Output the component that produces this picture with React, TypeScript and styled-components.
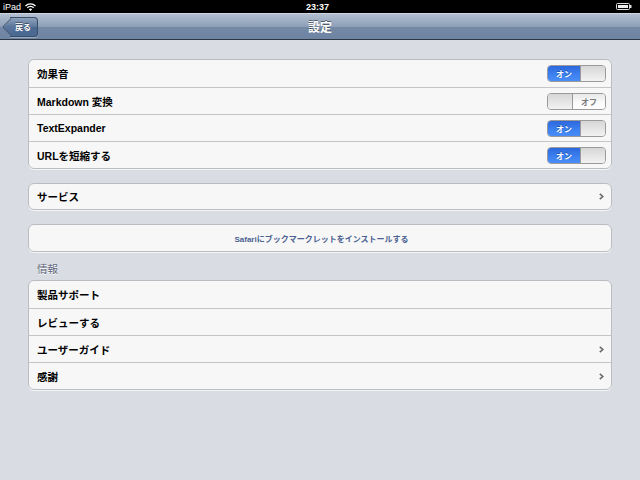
import React from "react";
import styled, { createGlobalStyle } from "styled-components";

const GlobalStyle = createGlobalStyle`
  html, body {
    margin: 0;
    padding: 0;
    background: #d9dce2;
  }
  body {
    font-family: "Liberation Sans", "Noto Sans CJK JP", sans-serif;
  }
`;

const Screen = styled.div`
  width: 640px;
  height: 480px;
  background: #d9dce2;
  overflow: hidden;
  display: flex;
  flex-direction: column;
`;

const StatusBar = styled.div`
  height: 13px;
  background: #000;
  color: #fff;
  font-size: 9px;
  display: grid;
  grid-template-columns: 1fr auto 1fr;
  align-items: center;
  padding: 0 8px 0 3px;
`;

const StatusLeft = styled.div`
  display: flex;
  align-items: center;
  gap: 4px;
`;

const StatusTime = styled.div`
  font-weight: bold;
`;

const StatusRight = styled.div`
  display: flex;
  justify-content: flex-end;
  align-items: center;
`;

const NavBar = styled.div`
  height: 25px;
  background: linear-gradient(#b3bfcf, #8d9fb8 50%, #7489a6 51%, #6d84a2);
  border-top: 1px solid #cdd5df;
  border-bottom: 1px solid #2d3642;
  display: grid;
  grid-template-columns: 1fr auto 1fr;
  align-items: center;
  padding: 0 5px;
`;

const BackButton = styled.div`
  justify-self: start;
  position: relative;
  height: 18px;
  margin-left: 5px;
  padding: 0 6px 0 5px;
  display: flex;
  align-items: center;
  color: #fff;
  font-size: 8px;
  font-weight: bold;
  text-shadow: 0 -1px 0 rgba(0, 0, 0, 0.45);
  background: linear-gradient(#8ea1bb, #5c779c 50%, #4a6890 51%, #4b6a93);
  border: 1px solid #3b4e69;
  border-left: none;
  border-radius: 0 4px 4px 0;
  box-shadow: 0 1px 0 rgba(255, 255, 255, 0.3);
  &::before {
    content: "";
    position: absolute;
    left: -6px;
    top: 2px;
    width: 12px;
    height: 12px;
    transform: rotate(45deg) scaleX(0.9);
    background: linear-gradient(135deg, #8ea1bb, #5c779c 50%, #4b6a93);
    border-left: 1px solid #3b4e69;
    border-bottom: 1px solid #3b4e69;
    border-radius: 0 0 0 3px;
  }
  span {
    position: relative;
  }
`;

const Title = styled.div`
  color: #fff;
  font-size: 12px;
  font-weight: bold;
  text-shadow: 0 -1px 0 rgba(0, 0, 0, 0.45);
`;

const Content = styled.div`
  padding: 19px 28px 0;
  display: flex;
  flex-direction: column;
`;

const Group = styled.div<{ $gap?: number }>`
  background: #f7f7f7;
  border: 1px solid #b9bcc1;
  border-radius: 6px;
  box-shadow: 0 1px 0 rgba(255, 255, 255, 0.7);
  margin-bottom: ${(p) => p.$gap ?? 14}px;
  overflow: hidden;
`;

const Row = styled.div<{ $h?: number }>`
  box-sizing: border-box;
  height: ${(p) => p.$h ?? 27}px;
  display: flex;
  align-items: center;
  justify-content: space-between;
  padding: 0 5px 0 8px;
  font-size: 10.5px;
  font-weight: bold;
  color: #000;
  & + & {
    border-top: 1px solid #c3c5c9;
  }
`;

const ButtonRow = styled(Row)`
  justify-content: center;
  font-size: 8px;
  color: #4a6290;
`;

const SectionHeader = styled.div`
  font-size: 10.5px;
  line-height: 12px;
  color: #5e6679;
  text-shadow: 0 1px 0 #fff;
  padding: 0 0 5px 9px;
  margin-top: -3px;
`;

const Switch = styled.div<{ $on: boolean }>`
  width: 59px;
  height: 17px;
  box-sizing: border-box;
  border: 1px solid #9a9a9a;
  border-radius: 4px;
  overflow: hidden;
  display: flex;
  flex-direction: ${(p) => (p.$on ? "row" : "row-reverse")};
  font-size: 8px;
  font-weight: bold;
`;

const SwitchLabel = styled.div<{ $on: boolean }>`
  flex: 1;
  display: flex;
  align-items: center;
  justify-content: center;
  color: ${(p) => (p.$on ? "#fff" : "#7a7a7a")};
  background: ${(p) =>
    p.$on
      ? "linear-gradient(#2c68dc, #3d82f2 60%, #4b8cf5)"
      : "linear-gradient(#e8e8e8, #fbfbfb 60%, #fdfdfd)"};
  text-shadow: ${(p) => (p.$on ? "0 -1px 0 rgba(0,0,0,0.3)" : "none")};
`;

const Knob = styled.div<{ $on: boolean }>`
  width: 25px;
  background: linear-gradient(#d6d6d6, #f2f2f2);
  border-left: ${(p) => (p.$on ? "1px solid #9a9a9a" : "none")};
  border-right: ${(p) => (p.$on ? "none" : "1px solid #9a9a9a")};
  box-sizing: border-box;
`;

const Chevron = styled.span`
  margin-right: 2px;
  display: flex;
`;

function Toggle({ on }: { on: boolean }) {
  return (
    <Switch $on={on}>
      <SwitchLabel $on={on}>{on ? "オン" : "オフ"}</SwitchLabel>
      <Knob $on={on} />
    </Switch>
  );
}

function Arrow() {
  return (
    <Chevron>
      <svg width="5" height="7" viewBox="0 0 5 7">
        <path d="M0.8 0.8 L3.8 3.5 L0.8 6.2" fill="none" stroke="#6a6a6a" strokeWidth="1.6" />
      </svg>
    </Chevron>
  );
}

const toggles = [
  { label: "効果音", on: true },
  { label: "Markdown 変換", on: false },
  { label: "TextExpander", on: true },
  { label: "URLを短縮する", on: true },
];

const info = [
  { label: "製品サポート", arrow: false },
  { label: "レビューする", arrow: false },
  { label: "ユーザーガイド", arrow: true },
  { label: "感謝", arrow: true },
];

export default function App() {
  return (
    <Screen>
      <GlobalStyle />
      <StatusBar>
        <StatusLeft>
          <span>iPad</span>
          <svg width="11" height="8" viewBox="0 0 11 8">
            <path d="M0.5 3 A7 7 0 0 1 10.5 3" fill="none" stroke="#fff" strokeWidth="1.3" />
            <path d="M2.3 4.8 A4.5 4.5 0 0 1 8.7 4.8" fill="none" stroke="#fff" strokeWidth="1.3" />
            <path d="M5.5 8 L3.8 6.3 A2.4 2.4 0 0 1 7.2 6.3 Z" fill="#fff" />
          </svg>
        </StatusLeft>
        <StatusTime>23:37</StatusTime>
        <StatusRight>
          <svg width="16" height="7" viewBox="0 0 16 7">
            <rect x="0.5" y="0.5" width="13" height="6" rx="1" fill="none" stroke="#ddd" />
            <rect x="2" y="2" width="10" height="3" fill="#eee" />
            <rect x="14" y="2" width="1.5" height="3" fill="#ddd" />
          </svg>
        </StatusRight>
      </StatusBar>
      <NavBar>
        <BackButton>
          <span>戻る</span>
        </BackButton>
        <Title>設定</Title>
        <div />
      </NavBar>
      <Content>
        <Group>
          {toggles.map((t) => (
            <Row key={t.label}>
              {t.label}
              <Toggle on={t.on} />
            </Row>
          ))}
        </Group>
        <Group>
          <Row $h={25}>
            サービス
            <Arrow />
          </Row>
        </Group>
        <Group>
          <ButtonRow $h={26}>Safariにブックマークレットをインストールする</ButtonRow>
        </Group>
        <SectionHeader>情報</SectionHeader>
        <Group>
          {info.map((r) => (
            <Row key={r.label}>
              {r.label}
              {r.arrow && <Arrow />}
            </Row>
          ))}
        </Group>
      </Content>
    </Screen>
  );
}
